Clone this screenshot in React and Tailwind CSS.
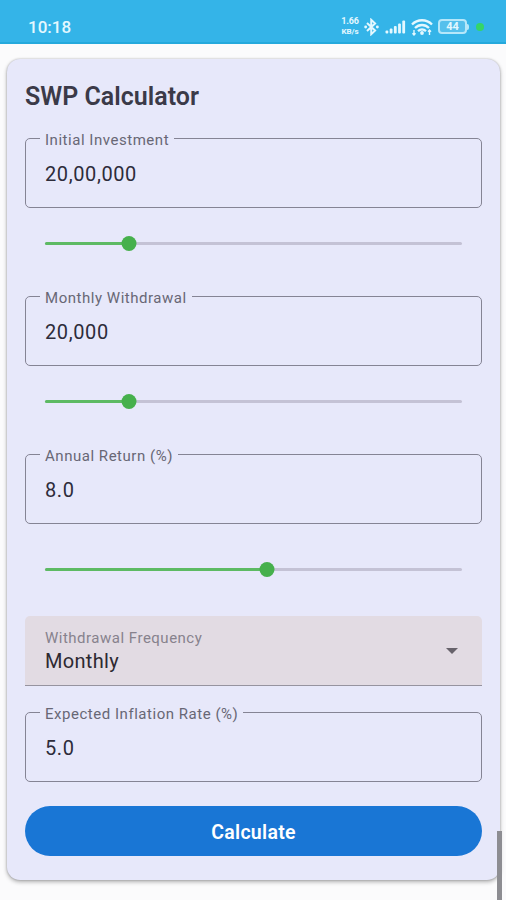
import React, { useState } from 'react';

const StatusBar = () => (
    <header className="h-[44px] bg-[#34b4e8] border-b-2 border-[#25a9dc] pl-[28px] pr-[22px] pt-[9px] flex justify-between text-[#e4f8ff]">
        <span className="text-[17px] leading-[36px] font-medium">10:18</span>
        <div className="flex items-center h-[35px]">
            <div className="w-[20px] text-[9px] font-bold text-center tracking-[-0.1px]">
                <p className="leading-[11px]">1.66</p>
                <p className="text-[8px] leading-[10px]">KB/s</p>
            </div>
            {/* Bluetooth */}
            <svg className="w-[17px] h-[18px] ml-[3px]" viewBox="0 0 18 20" fill="none" stroke="currentColor" strokeWidth="2.2">
                <path d="M4 5.5 13 14 8.7 18V2L13 6 4 14.5" />
                <circle cx="2.5" cy="10" r="1.6" fill="currentColor" stroke="none" />
                <circle cx="15.5" cy="10" r="1.6" fill="currentColor" stroke="none" />
            </svg>
            {/* Signal */}
            <svg className="w-[22px] h-[16px] ml-[5px]" viewBox="0 0 22 16" fill="currentColor">
                <rect x="0.5" y="11.5" width="2.8" height="3" rx="1" />
                <rect x="4.7" y="9.5" width="2.8" height="5" rx="1" />
                <rect x="8.9" y="7" width="2.8" height="7.5" rx="1" />
                <rect x="13.1" y="4.5" width="2.8" height="10" rx="1" />
                <rect x="17.3" y="1.5" width="2.8" height="13" rx="1" />
            </svg>
            {/* Wifi */}
            <svg className="w-[22px] h-[18px] ml-[4px]" viewBox="0 0 22 18" fill="none" stroke="currentColor" strokeWidth="2.3">
                <path d="M1 6.5C6.5.8 15.5.8 21 6.5M4 10c4-4 10-4 14 0M7 13.2c2.4-2.3 5.6-2.3 8 0" />
                <circle cx="11" cy="15" r="1.9" fill="currentColor" stroke="none" />
                <path d="M3 12v5M1.5 15.3 3 17l1.5-1.7M18.5 17v-5M17 13.7l1.5-1.7 1.5 1.7" strokeWidth="1.4" />
            </svg>
            {/* Battery */}
            <div className="flex items-center ml-[5px]">
                <div className="w-[29px] h-[15px] rounded-[4px] border-2 border-[#b5e7fa] bg-[#55c0ec] flex items-center justify-center text-[11px] leading-none font-bold">44</div>
                <div className="w-[2px] h-[6px] rounded-r bg-[#b5e7fa]" />
            </div>
            <div className="w-[8px] h-[8px] rounded-full bg-[#35d567] ml-[7px]" />
        </div>
    </header>
);

const Field = ({ label, value }) => (
    <fieldset className="h-[78px] border border-[#858494] rounded-[5px] pl-[14px]">
        <legend className="h-[17px] px-[5px] text-[15px] leading-[21px] tracking-[0.53px] text-[#686775]">{label}</legend>
        <p className="pl-[5px] pt-[14px] text-[20px] leading-[26px] tracking-[0.6px] text-[#2d2c3a]">{value}</p>
    </fieldset>
);

const Slider = ({ percent }) => (
    <div className="relative mx-5 h-[15px] flex items-center">
        <div className="w-full h-[3px] rounded-full bg-[#c4c2d5]">
            <div className="h-full rounded-full bg-[#5dba63]" style={{ width: `${percent}%` }} />
        </div>
        <div className="absolute top-0 w-[15px] h-[15px] -translate-x-1/2 rounded-full bg-[#46b04c]" style={{ left: `${percent}%` }} />
    </div>
);

const App = () => {
    const [form] = useState({ investment: '20,00,000', withdrawal: '20,000', annualReturn: '8.0', frequency: 'Monthly', inflation: '5.0' });

    return (
        <div className="relative h-[900px] overflow-hidden bg-[#fbfbfc] font-[Roboto,sans-serif]">
            <StatusBar />

            <main className="ml-[7px] mr-[6px] mt-[15px] h-[821px] px-[18px] rounded-[13px] bg-[#e7e8fa] shadow-[0_2px_4px_rgba(0,0,0,0.3),0_0_2px_rgba(0,0,0,0.25)]">
                <h1 className="pt-[22px] h-[71px] text-[25px] leading-[32px] font-semibold text-[#3b3a48]">SWP Calculator</h1>

                <Field label="Initial Investment" value={form.investment} />
                <div className="pt-[28px] pb-[37px]"><Slider percent={20.1} /></div>

                <Field label="Monthly Withdrawal" value={form.withdrawal} />
                <div className="pt-[28px] pb-[37px]"><Slider percent={20.1} /></div>

                <Field label="Annual Return (%)" value={form.annualReturn} />
                <div className="pt-[38px] pb-[39px]"><Slider percent={53.3} /></div>

                {/* Frequency dropdown */}
                <div className="h-[70px] px-5 flex items-center justify-between rounded-t-[5px] bg-[#e2dbe3] border-b border-[#96939f]">
                    <div>
                        <p className="text-[15px] leading-[20px] tracking-[0.5px] text-[#87828d]">Withdrawal Frequency</p>
                        <p className="text-[20px] leading-[26px] tracking-[0.3px] text-[#2d2931]">{form.frequency}</p>
                    </div>
                    <svg className="w-[12px] h-[6px] mr-[4px]" viewBox="0 0 12 6" fill="#67626b"><path d="M0 0h12L6 6z" /></svg>
                </div>

                <div className="pt-[18px]">
                    <Field label="Expected Inflation Rate (%)" value={form.inflation} />
                </div>

                <button className="mt-[24px] w-full h-[50px] pt-[3px] rounded-full bg-[#1976d5] text-white text-[19.5px] font-semibold tracking-[0.3px]">Calculate</button>
            </main>

            {/* Scrollbar */}
            <div className="absolute right-[4px] bottom-0 w-[5px] h-[69px] bg-[#8d8d92]" />
        </div>
    );
};

export default App;
